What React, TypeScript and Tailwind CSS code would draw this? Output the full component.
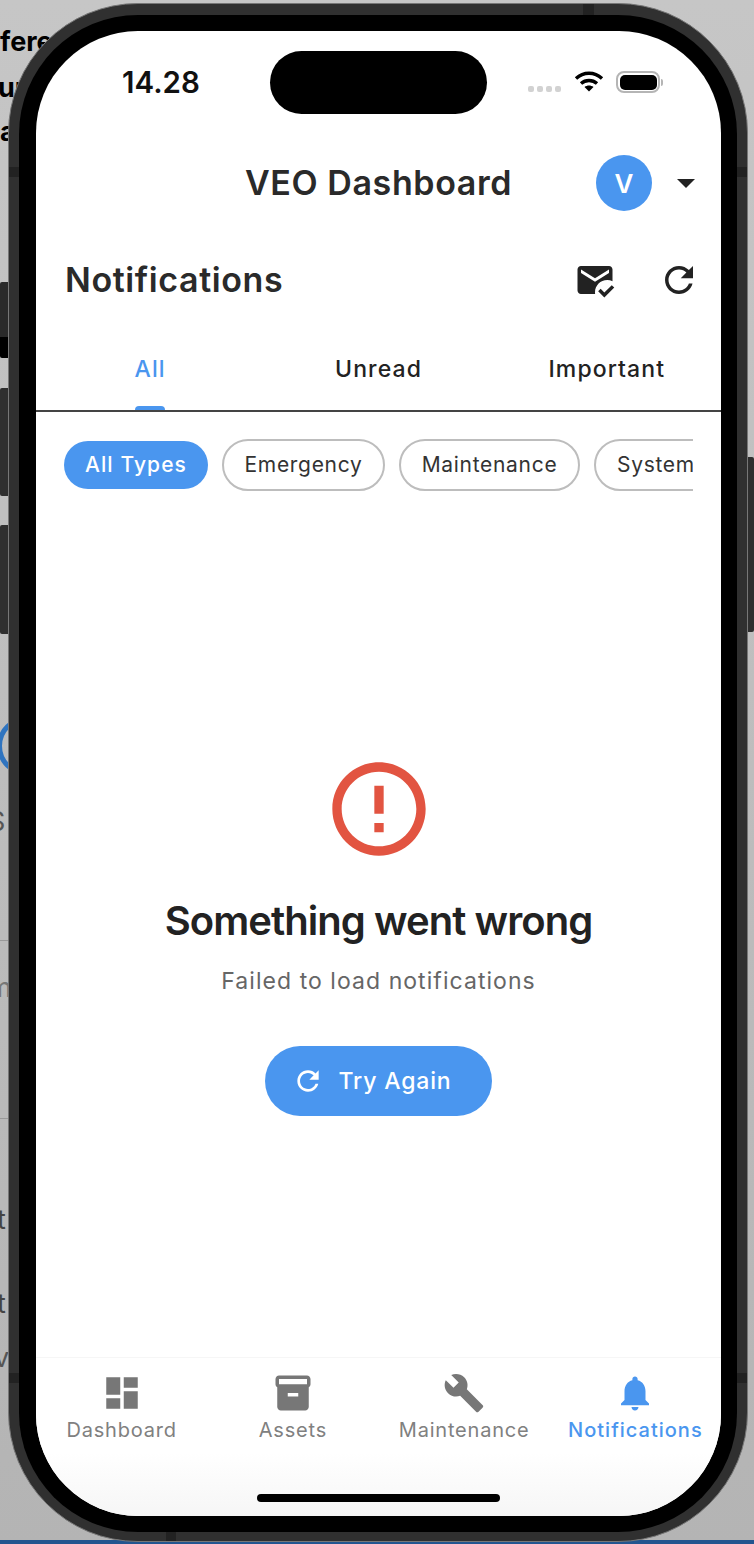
import React from "react";

const ICONS = {
  dashboard: "M3 13h8V3H3v10zm0 8h8v-6H3v6zm10 0h8V11h-8v10zm0-18v6h8V3h-8z",
  inventory:
    "M20 2H4c-1 0-2 .9-2 2v3.01c0 .72.43 1.34 1 1.69V20c0 1.1 1.1 2 2 2h14c.9 0 2-.9 2-2V8.7c.57-.35 1-.97 1-1.69V4c0-1.1-1-2-2-2zm-5 12H9v-2h6v2zm5-7H4V4l16-.02V7z",
  build:
    "M22.7 19l-9.1-9.1c.9-2.3.4-5-1.5-6.9-2-2-5-2.4-7.4-1.3L9 6 6 9 1.6 4.7C.4 7.1.9 10.1 2.9 12.1c1.9 1.9 4.6 2.4 6.9 1.5l9.1 9.1c.4.4 1 .4 1.4 0l2.3-2.3c.5-.4.5-1.1.1-1.4z",
  bell: "M12 22c1.1 0 2-.9 2-2h-4c0 1.1.89 2 2 2zm6-6v-5c0-3.07-1.64-5.64-4.5-6.32V4c0-.83-.67-1.5-1.5-1.5s-1.5.67-1.5 1.5v.68C7.63 5.36 6 7.92 6 11v5l-2 2v1h16v-1l-2-2z",
  refresh:
    "M17.65 6.35C16.2 4.9 14.21 4 12 4c-4.42 0-7.99 3.58-7.99 8s3.57 8 7.99 8c3.73 0 6.84-2.55 7.73-6h-2.08c-.82 2.33-3.04 4-5.65 4-3.31 0-6-2.69-6-6s2.69-6 6-6c1.66 0 3.14.69 4.22 1.78L13 11h7V4l-2.35 2.35z",
  emailRead:
    "M12 19c0-3.87 3.13-7 7-7 1.08 0 2.09.25 3 .68V6c0-1.1-.9-2-2-2H4c-1.1 0-2 .9-2 2v12c0 1.1.9 2 2 2h8.08c-.05-.33-.08-.66-.08-1zM4 6l8 5 8-5v2l-8 5-8-5V6zm13.34 16l-3.54-3.54 1.41-1.41 2.12 2.12 4.24-4.24L23 16.34 17.34 22z",
  error:
    "M11 15h2v2h-2zm0-8h2v6h-2zm.99-5C6.47 2 2 6.48 2 12s4.47 10 9.99 10C17.52 22 22 17.52 22 12S17.52 2 11.99 2zM12 20c-4.42 0-8-3.58-8-8s3.58-8 8-8 8 3.58 8 8-3.58 8-8 8z",
};

const Icon = ({ d, className }: { d: string; className: string }) => (
  <svg viewBox="0 0 24 24" fill="currentColor" className={className}>
    <path d={d} />
  </svg>
);

const tabs = ["All", "Unread", "Important"];

const navItems = [
  { label: "Dashboard", icon: ICONS.dashboard },
  { label: "Assets", icon: ICONS.inventory },
  { label: "Maintenance", icon: ICONS.build },
  { label: "Notifications", icon: ICONS.bell, active: true },
];

const StatusBar = () => (
  <div className="flex h-[83px] shrink-0 items-start pt-[20px] pl-[86px]">
    <span className="mt-[13px] w-[148px] text-[29.5px] leading-[36px] font-semibold text-[#111]">
      14.28
    </span>
    <div className="h-[63px] w-[217px] rounded-full bg-black" />
    <div className="ml-[41px] flex h-[63px] items-start">
      <div className="mt-[35px] flex gap-[3px]">
        <span className="h-[6px] w-[6px] rounded-[2px] bg-[#d2d2d2]" />
        <span className="h-[6px] w-[6px] rounded-[2px] bg-[#d2d2d2]" />
        <span className="h-[6px] w-[6px] rounded-[2px] bg-[#d2d2d2]" />
        <span className="h-[6px] w-[6px] rounded-[2px] bg-[#d2d2d2]" />
      </div>
      <svg viewBox="0 0 30 22" className="mt-[19px] ml-[13px] h-[22px] w-[30px]" fill="none" stroke="#000" strokeWidth="3.4">
        <path d="M2 8.5C9.5 1.5 20.5 1.5 28 8.5" />
        <path d="M7 13.5C11.5 9.5 18.5 9.5 23 13.5" />
        <path d="M15 21.5L10.5 17C13 15 17 15 19.5 17Z" fill="#000" stroke="none" />
      </svg>
      <div className="mt-[20px] ml-[12px] flex items-center">
        <div className="h-[22px] w-[44px] rounded-[8px] border-2 border-[#b5b5b5] p-[1.5px]">
          <div className="h-full w-full rounded-[5px] bg-black" />
        </div>
        <span className="ml-[1px] h-[7px] w-[2px] rounded-r-full bg-[#b5b5b5]" />
      </div>
    </div>
  </div>
);

const Header = () => (
  <div className="grid h-[136px] shrink-0 grid-cols-[1fr_auto_1fr] items-center pt-[2px]">
    <div />
    <h1 className="text-[34px] leading-[40px] font-semibold tracking-[0.6px] text-[#2a2a2a]">
      VEO Dashboard
    </h1>
    <div className="flex items-center justify-end pr-[26px]">
      <div className="flex h-[56px] w-[56px] items-center justify-center rounded-full bg-[#4a96ef] text-[26px] font-semibold text-white">
        V
      </div>
      <span className="ml-[25px] h-0 w-0 border-x-[9px] border-t-[9px] border-x-transparent border-t-[#222]" />
    </div>
  </div>
);

const TitleRow = () => (
  <div className="flex h-[60px] shrink-0 items-center justify-between pr-[21px] pl-[29px]">
    <h2 className="text-[34px] leading-[40px] font-semibold tracking-[0.6px] text-[#2a2a2a]">
      Notifications
    </h2>
    <div className="flex items-center gap-[42px]">
      <Icon d={ICONS.emailRead} className="h-[42px] w-[42px] text-[#222]" />
      <Icon d={ICONS.refresh} className="h-[42px] w-[42px] text-[#222]" />
    </div>
  </div>
);

const Tabs = () => (
  <div className="mt-[29px] grid h-[73px] shrink-0 grid-cols-3 border-b-2 border-[#444]">
    {tabs.map((tab, i) => (
      <div key={tab} className="relative flex justify-center pt-[16px]">
        <span
          className={`text-[23px] leading-[28px] font-[450] tracking-[1.1px] ${i === 0 ? "text-[#4a96ef]" : "text-[#222]"}`}
        >
          {tab}
        </span>
        {i === 0 && (
          <span className="absolute bottom-0 left-1/2 h-[4px] w-[30px] -translate-x-1/2 rounded-t-[4px] bg-[#4a96ef]" />
        )}
      </div>
    ))}
  </div>
);

const Chips = () => (
  <div className="mt-[27px] ml-[28px] flex h-[52px] w-[629px] shrink-0 items-center gap-[14px] overflow-hidden">
    <div className="flex h-[48px] w-[144px] shrink-0 items-center justify-center rounded-full bg-[#4a96ef] text-[21px] font-[450] tracking-[1.1px] text-white">
      All Types
    </div>
    <div className="flex h-[52px] w-[163px] shrink-0 items-center justify-center rounded-full border-2 border-[#bdbdbd] text-[21px] tracking-[0.7px] text-[#333]">
      Emergency
    </div>
    <div className="flex h-[52px] w-[181px] shrink-0 items-center justify-center rounded-full border-2 border-[#bdbdbd] text-[21px] tracking-[0.7px] text-[#333]">
      Maintenance
    </div>
    <div className="flex h-[52px] w-[163px] shrink-0 items-center rounded-full border-2 border-[#bdbdbd] pl-[21px] text-[21px] tracking-[0.7px] text-[#333]">
      System
    </div>
  </div>
);

const ErrorState = () => (
  <div className="flex flex-1 flex-col items-center pt-[262px]">
    <Icon d={ICONS.error} className="h-[112px] w-[112px] text-[#e25441]" />
    <h3 className="mt-[32px] text-[40px] leading-[48px] font-semibold tracking-[-0.95px] text-[#222]">
      Something went wrong
    </h3>
    <p className="mt-[22px] text-[23px] leading-[28px] tracking-[1.05px] text-[#666]">
      Failed to load notifications
    </p>
    <button className="mt-[51px] flex h-[70px] w-[227px] items-center justify-center gap-[14px] rounded-full bg-[#4a96ef] pr-[13px] text-[23px] font-[450] tracking-[0.85px] text-white">
      <Icon d={ICONS.refresh} className="h-[32px] w-[32px]" />
      Try Again
    </button>
  </div>
);

const BottomNav = () => (
  <div className="h-[159px] shrink-0 border-t border-[#f6f6f6] bg-gradient-to-b from-white from-[60%] to-[#f6f6f6]">
    <div className="grid grid-cols-4 pt-[14px]">
      {navItems.map((item) => (
        <div
          key={item.label}
          className={`flex flex-col items-center ${item.active ? "text-[#4a96ef]" : "text-[#777]"}`}
        >
          <Icon d={item.icon} className="h-[42px] w-[42px]" />
          <span
            className={`mt-[3px] text-[20px] leading-[26px] ${item.active ? "font-medium tracking-[1px]" : "tracking-[0.8px] text-[#808080]"}`}
          >
            {item.label}
          </span>
        </div>
      ))}
    </div>
    <div className="mx-auto mt-[51px] h-[8px] w-[243px] rounded-full bg-black" />
  </div>
);

export default function App() {
  return (
    <div
      className="relative h-[1544px] w-[754px] overflow-hidden bg-gradient-to-b from-[#c6c6c6] to-[#b4b4b4] pt-[3px] pl-[8px]"
      style={{ fontFamily: "Inter, 'Noto Sans', sans-serif" }}
    >
      {/* desktop behind the simulator */}
      <span className="absolute top-[22px] left-0 text-[27px] font-bold text-black">fere</span>
      <span className="absolute top-[68px] left-[-2px] text-[27px] font-bold text-black">ur</span>
      <span className="absolute top-[112px] left-0 text-[27px] font-bold text-black">a</span>
      <span className="absolute top-[802px] left-[-12px] text-[27px] text-[#555]">S</span>
      <span className="absolute top-[968px] left-[-12px] text-[27px] text-[#777]">m</span>
      <span className="absolute top-[1200px] left-[-3px] text-[27px] text-[#444]">t</span>
      <span className="absolute top-[1284px] left-[-3px] text-[27px] text-[#444]">t</span>
      <span className="absolute top-[1338px] left-[-6px] text-[27px] text-[#555]">v</span>
      <div className="absolute top-[940px] left-0 h-px w-[9px] bg-[#999]" />
      <div className="absolute top-[1118px] left-0 h-px w-[9px] bg-[#999]" />
      <div className="absolute top-[716px] left-[-3px] h-[60px] w-[60px] rounded-full border-[5px] border-[#2f74c0]" />
      <div className="absolute right-0 bottom-0 left-0 h-[4px] bg-[#23558f]" />

      {/* side buttons */}
      <div className="absolute top-[282px] left-0 h-[76px] w-[9px] rounded-l-[2px] bg-gradient-to-b from-[#2a2a2a] from-[72%] to-black to-[72%]" />
      <div className="absolute top-[388px] left-0 h-[108px] w-[9px] rounded-l-[2px] bg-[#2f2f2f]" />
      <div className="absolute top-[525px] left-0 h-[109px] w-[9px] rounded-l-[2px] bg-[#2f2f2f]" />
      <div className="absolute top-[457px] right-0 h-[175px] w-[8px] rounded-r-[2px] bg-[#2f2f2f]" />

      <div className="relative h-[1539px] w-[740px] rounded-[130px] border border-[#777] bg-[#303030] pt-[11px] pr-[10px] pb-[9px] pl-[10px]">
        {/* antenna bands */}
        <span className="absolute top-0 left-[574px] h-[11px] w-[11px] bg-[#222]" />
        <span className="absolute top-[163px] left-0 h-[10px] w-[10px] bg-[#222]" />
        <span className="absolute top-[163px] right-0 h-[10px] w-[10px] bg-[#222]" />
        <span className="absolute top-[1369px] left-0 h-[10px] w-[10px] bg-[#222]" />
        <span className="absolute top-[1369px] right-0 h-[10px] w-[10px] bg-[#222]" />
        <span className="absolute bottom-0 left-[157px] h-[9px] w-[10px] bg-[#222]" />

        <div className="h-full w-full rounded-[119px] bg-black pt-[16px] pr-[16px] pb-[16px] pl-[17px]">
          <div className="flex h-full w-full flex-col overflow-hidden rounded-[102px] bg-white">
            <StatusBar />
            <Header />
            <TitleRow />
            <Tabs />
            <Chips />
            <ErrorState />
            <BottomNav />
          </div>
        </div>
      </div>
    </div>
  );
}
